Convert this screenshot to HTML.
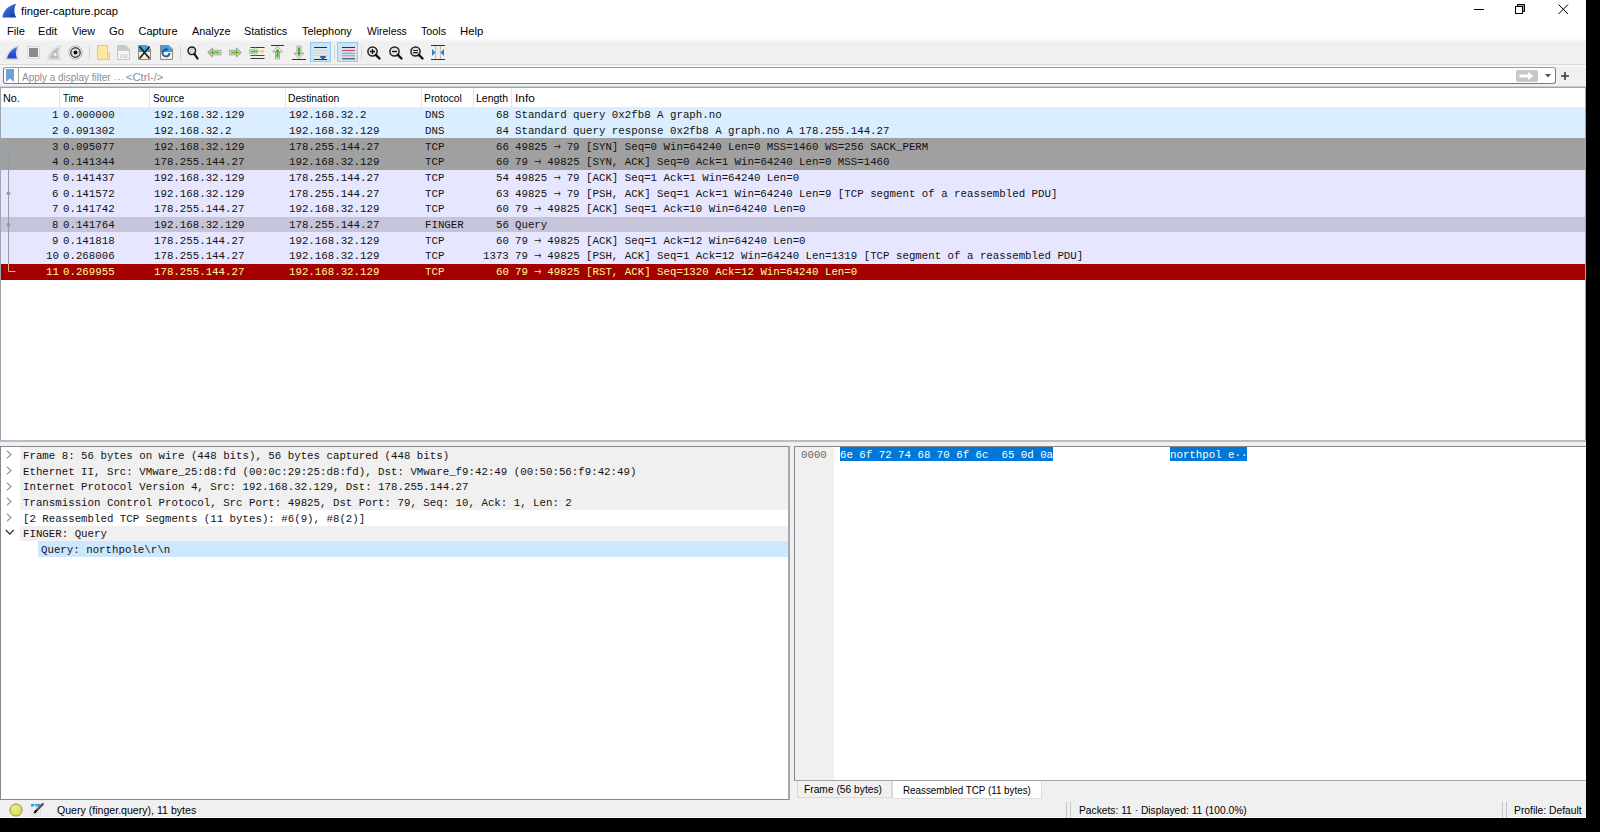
<!DOCTYPE html>
<html><head><meta charset="utf-8"><title>finger-capture.pcap</title>
<style>
html,body{margin:0;padding:0;}
body{width:1600px;height:832px;background:#000;position:relative;overflow:hidden;}
body div{position:absolute;box-sizing:border-box;}
.S{font-family:"Liberation Sans", sans-serif;white-space:pre;}
.M{font-family:"Liberation Mono", monospace;white-space:pre;}
.ar{display:inline-block;transform:translate(0.2px,-1.9px) scale(1.0,1.75);transform-origin:50% 50%;}
svg{position:absolute;overflow:visible;}
</style></head><body>

<div style="left:0px;top:0px;width:1586px;height:818px;background:#f0f0f0;"></div>
<div style="left:0px;top:0px;width:1586px;height:39px;background:#ffffff;"></div>
<div style="left:0px;top:39px;width:1586px;height:3px;background:linear-gradient(#fbfbfb,#f0f0f0);"></div>
<svg style="left:2px;top:3px" width="15" height="15" viewBox="0 0 15 15">
<defs><linearGradient id="tg" x1="0" y1="0" x2="1" y2="1"><stop offset="0" stop-color="#4a8af0"/><stop offset="1" stop-color="#0a35a0"/></linearGradient></defs>
<path d="M0.3 14.5 C1.5 7.5 6 2.5 14.2 0.8 C11.8 4.5 11.8 10.5 14.2 14.5 Z" fill="url(#tg)"/></svg>
<div class="S" style="left:20.83px;top:5.57px;font-size:11.5px;line-height:11.5px;color:#000;transform:scaleX(0.9803);transform-origin:0 0;">finger-capture.pcap</div>
<div style="left:1474px;top:9px;width:10px;height:1px;background:#000;"></div>
<svg style="left:1515px;top:4px" width="11" height="11" viewBox="0 0 11 11">
<path d="M2.5 2.5 V0.5 H9.5 V7.5 H7.5" fill="#9a9a9a" stroke="#000"/>
<rect x="0.5" y="2.5" width="7" height="7" fill="#fff" stroke="#000"/></svg>
<svg style="left:1558px;top:4px" width="11" height="11" viewBox="0 0 11 11">
<path d="M0.5 0.5 L10 10 M10 0.5 L0.5 10" stroke="#000" stroke-width="1"/></svg>
<div class="S" style="left:6.61px;top:26.19px;font-size:11px;line-height:11px;color:#000;transform:scaleX(1.0101);transform-origin:0 0;">File</div>
<div class="S" style="left:38.12px;top:26.19px;font-size:11px;line-height:11px;color:#000;">Edit</div>
<div class="S" style="left:71.95px;top:26.19px;font-size:11px;line-height:11px;color:#000;transform:scaleX(0.9748);transform-origin:0 0;">View</div>
<div class="S" style="left:109.44px;top:26.19px;font-size:11px;line-height:11px;color:#000;transform:scaleX(1.0223);transform-origin:0 0;">Go</div>
<div class="S" style="left:138.45px;top:26.19px;font-size:11px;line-height:11px;color:#000;">Capture</div>
<div class="S" style="left:192.00px;top:26.19px;font-size:11px;line-height:11px;color:#000;transform:scaleX(0.9842);transform-origin:0 0;">Analyze</div>
<div class="S" style="left:244.11px;top:26.19px;font-size:11px;line-height:11px;color:#000;transform:scaleX(0.9833);transform-origin:0 0;">Statistics</div>
<div class="S" style="left:302.18px;top:26.19px;font-size:11px;line-height:11px;color:#000;transform:scaleX(0.9932);transform-origin:0 0;">Telephony</div>
<div class="S" style="left:366.55px;top:26.19px;font-size:11px;line-height:11px;color:#000;transform:scaleX(0.9438);transform-origin:0 0;">Wireless</div>
<div class="S" style="left:421.29px;top:26.19px;font-size:11px;line-height:11px;color:#000;transform:scaleX(0.9769);transform-origin:0 0;">Tools</div>
<div class="S" style="left:460.09px;top:26.19px;font-size:11px;line-height:11px;color:#000;transform:scaleX(1.0336);transform-origin:0 0;">Help</div>
<div style="left:0px;top:64px;width:1586px;height:1px;background:#d9d9d9;"></div>
<div style="left:89px;top:45px;width:1px;height:15px;background:#d6d6d6;"></div>
<div style="left:179.5px;top:45px;width:1px;height:15px;background:#d6d6d6;"></div>
<div style="left:333.5px;top:45px;width:1px;height:15px;background:#d6d6d6;"></div>
<div style="left:360.5px;top:45px;width:1px;height:15px;background:#d6d6d6;"></div>
<div style="left:310px;top:42px;width:21px;height:20px;background:#cce4f7;border:1px solid #99c9ef;"></div>
<div style="left:337px;top:42px;width:21px;height:20px;background:#cce4f7;border:1px solid #99c9ef;"></div>
<svg style="left:5px;top:45px" width="15" height="15" viewBox="0 0 15 15"><defs><linearGradient id="fb" x1="0" y1="0" x2="0" y2="1"><stop offset="0" stop-color="#4d6ee8"/><stop offset="1" stop-color="#1f3bc9"/></linearGradient></defs><path d="M0.5 14.5 C2 8 6 2.5 14 0.5 C11.5 4.5 11.5 10 13.5 14.5 Z" fill="#e8e8e8" stroke="#d0d0d0" stroke-width="0.8"/><path d="M2 13.5 C3.5 8 7 3.5 12.5 2 C10.5 5.5 10.5 10 12 13.5 Z" fill="url(#fb)"/></svg>
<svg style="left:27px;top:46px" width="13" height="13" viewBox="0 0 13 13"><rect x="0.5" y="0.5" width="12" height="12" fill="#f4f4f4" stroke="#d8d8d8"/><rect x="2" y="2" width="9" height="9" fill="#8a8a8a"/></svg>
<svg style="left:47px;top:45px" width="15" height="15" viewBox="0 0 15 15"><path d="M0.5 14.5 C2 8 6 2.5 14 0.5 C11.5 4.5 11.5 10 13.5 14.5 Z" fill="#e6e6e6" stroke="#cfcfcf" stroke-width="0.8"/><path d="M2.5 13.5 C4 8 7 4 12 2.5 C10.5 5.5 10.5 10 12 13.5 Z" fill="#bdbdbd"/><circle cx="8" cy="9.5" r="1.6" fill="#f2f2f2"/></svg>
<svg style="left:68px;top:45px" width="15" height="15" viewBox="0 0 15 15"><circle cx="7.5" cy="7.5" r="6.7" fill="#f2f2f2" stroke="#b4b4b4" stroke-width="1"/><circle cx="7.5" cy="7.5" r="4.7" fill="#f8f8f8" stroke="#4a4a4a" stroke-width="1.5"/><circle cx="7.5" cy="7.5" r="3.5" fill="none" stroke="#6a6a6a" stroke-width="0.9" stroke-dasharray="1.2 1.55"/><circle cx="7.5" cy="7.5" r="2" fill="#000"/></svg>
<svg style="left:97px;top:45px" width="13" height="15" viewBox="0 0 13 15"><path d="M0.5 0.5 H10.5 V8 H12.5 V14.5 H0.5 Z" fill="#fce8a0" stroke="#efc95a" stroke-width="1"/><path d="M10.5 8 V14.5" stroke="#efc95a"/></svg>
<svg style="left:117px;top:45px" width="13" height="15" viewBox="0 0 13 15"><path d="M0.5 0.5 H9 L12.5 4 V14.5 H0.5 Z" fill="#f6f6f6" stroke="#c4c4c4"/><path d="M1 1 H9 L12 4 V6 H1 Z" fill="#c9c9c9"/><text x="6.5" y="12.5" font-family="Liberation Mono" font-size="4.5" text-anchor="middle" fill="#b5b5b5">010</text></svg>
<svg style="left:138px;top:45px" width="13" height="15" viewBox="0 0 13 15"><path d="M0.5 0.5 H9 L12.5 4 V14.5 H0.5 Z" fill="#f6f1dc" stroke="#8a8a80"/><path d="M1 1 H9 L12 4 V7 H1 Z" fill="#3ea3e6"/><path d="M1.5 1.5 L11.5 13.5 M11.5 1.5 L1.5 13.5" stroke="#222" stroke-width="1.8"/></svg>
<svg style="left:160px;top:45px" width="13" height="15" viewBox="0 0 13 15"><path d="M0.5 0.5 H9 L12.5 4 V14.5 H0.5 Z" fill="#f6f1dc" stroke="#8a8a80"/><path d="M1 1 H9 L12 4 V7 H1 Z" fill="#3ea3e6"/><path d="M9.5 8 A3.5 3.5 0 1 1 6.5 4.5" fill="none" stroke="#1f4fb8" stroke-width="1.8"/><path d="M5.5 2.5 L8.5 4.5 L5.5 6.5 Z" fill="#1f4fb8"/></svg>
<svg style="left:187px;top:46px" width="12" height="14" viewBox="0 0 12 14"><circle cx="4.8" cy="4.8" r="3.8" fill="#d8d8d8" stroke="#1a1a1a" stroke-width="1.4"/><path d="M7.3 7.8 L10.5 12.5" stroke="#111" stroke-width="2.2" stroke-linecap="round"/></svg>
<svg style="left:207px;top:47px" width="15" height="11" viewBox="0 0 15 11"><path d="M1 5.5 L5.6 1.2 V3.3 H13.8 V7.7 H5.6 V9.8 Z" fill="#f6f6f6" stroke="#a0a0a0" stroke-width="1.1" stroke-linejoin="round"/><path d="M2.6 5.5 L5.8 3.4 V4.7 H12.2 V6.3 H5.8 V7.6 Z" fill="#5cb81e" stroke="#5cb81e" stroke-width="0.4" stroke-linejoin="round"/></svg>
<svg style="left:229px;top:47px" width="13" height="11" viewBox="0 0 13 11"><g transform="translate(13 0) scale(-1 1)"><path d="M1 5.5 L5.6 1.2 V3.3 H12.3 V7.7 H5.6 V9.8 Z" fill="#f6f6f6" stroke="#a0a0a0" stroke-width="1.1" stroke-linejoin="round"/><path d="M2.6 5.5 L5.8 3.4 V4.7 H10.8 V6.3 H5.8 V7.6 Z" fill="#5cb81e" stroke="#5cb81e" stroke-width="0.4" stroke-linejoin="round"/></g></svg>
<svg style="left:249px;top:46px" width="16" height="14" viewBox="0 0 16 14"><path d="M1.5 1.5 H15.5" stroke="#3a3a3a" stroke-width="1"/><path d="M1.5 9.5 H15.5" stroke="#4a4a4a" stroke-width="1"/><path d="M1.5 12.5 H15.5" stroke="#3a3a3a" stroke-width="1"/><path d="M0.5 3.5 H6 V1.8 L10.5 5.5 L6 9.2 V7.5 H0.5 Z" fill="#f6f6f6" stroke="#b0b0b0" stroke-width="0.8"/><path d="M1.5 4.6 H7 V3.8 L9 5.5 L7 7.2 V6.4 H1.5 Z" fill="#5cb82a"/><rect x="11.5" y="4" width="3.5" height="2.5" fill="#f0dc3a"/></svg>
<svg style="left:271px;top:45px" width="13" height="15" viewBox="0 0 13 15"><path d="M0 0.5 H13" stroke="#333" stroke-width="1"/><path d="M6.5 1.5 L11.5 7 H8.5 V14 H4.5 V7 H1.5 Z" fill="#f4f4f4" stroke="#a8a8a8"/><path d="M6.5 3.5 L9 7 H7.6 V12.5 H5.4 V7 H4 Z" fill="#48b01a"/></svg>
<svg style="left:292px;top:45px" width="14" height="15" viewBox="0 0 14 15"><path d="M0 14.5 H14" stroke="#333" stroke-width="1"/><path d="M7 13.5 L12 8 H9 V1 H5 V8 H2 Z" fill="#f4f4f4" stroke="#a8a8a8"/><path d="M7 11.5 L9.5 8 H8.1 V2.5 H5.9 V8 H4.5 Z" fill="#48b01a"/></svg>
<svg style="left:314px;top:47px" width="13" height="13" viewBox="0 0 13 13"><path d="M0 0.5 H13 M0 12.5 H13" stroke="#2b2b2b" stroke-width="1"/><rect x="0" y="2" width="13" height="9.5" fill="#e9e9e3"/><path d="M0 3.5 H13 M0 6 H13 M0 8.5 H13" stroke="#c8c8c0" stroke-width="0.8"/><path d="M6 10 H12 L9 12.5 Z" fill="#2a5ea8"/><rect x="6" y="9" width="6" height="1.5" rx="0.7" fill="#2a5ea8"/></svg>
<svg style="left:341.5px;top:47px" width="13" height="13" viewBox="0 0 13 13"><path d="M0 0.5 H13" stroke="#333"/><path d="M0 3.5 H13" stroke="#e84040"/><path d="M0 6.3 H13" stroke="#7a9ad0"/><path d="M0 8.8 H13" stroke="#a48ab8"/><path d="M0 11.8 H13" stroke="#333"/></svg>
<svg style="left:367px;top:46px" width="14" height="14" viewBox="0 0 14 14"><circle cx="5.5" cy="5.5" r="4.6" fill="#e4e4e4" stroke="#222" stroke-width="1.5"/><path d="M8.8 8.8 L12.5 12.5" stroke="#111" stroke-width="2.4" stroke-linecap="round"/><path d="M3 5.5 H8 M5.5 3 V8" stroke="#111" stroke-width="1.3"/></svg>
<svg style="left:388.5px;top:46px" width="14" height="14" viewBox="0 0 14 14"><circle cx="5.5" cy="5.5" r="4.6" fill="#e4e4e4" stroke="#222" stroke-width="1.5"/><path d="M8.8 8.8 L12.5 12.5" stroke="#111" stroke-width="2.4" stroke-linecap="round"/><path d="M3 5.5 H8" stroke="#111" stroke-width="1.3"/></svg>
<svg style="left:410px;top:46px" width="14" height="14" viewBox="0 0 14 14"><circle cx="5.5" cy="5.5" r="4.6" fill="#e4e4e4" stroke="#222" stroke-width="1.5"/><path d="M8.8 8.8 L12.5 12.5" stroke="#111" stroke-width="2.4" stroke-linecap="round"/><path d="M3.2 4.5 H7.8 M3.2 6.6 H7.8" stroke="#111" stroke-width="1.1"/></svg>
<svg style="left:431px;top:45px" width="14" height="15" viewBox="0 0 14 15"><path d="M0 0.5 H14 M0 14.5 H14" stroke="#333"/><rect x="4" y="1" width="6" height="13" fill="#f0f0f0"/><path d="M4.5 1 V14 M9.5 1 V14" stroke="#bbb"/><path d="M4 4 H10 M4 7 H10 M4 10 H10" stroke="#ddd" stroke-width="0.6"/><path d="M1 4 L4.5 7.5 L1 11 Z" fill="#3c78c8"/><path d="M13 4 L9.5 7.5 L13 11 Z" fill="#3c78c8"/></svg>
<div style="left:0px;top:65px;width:1586px;height:2px;background:#f7f7f7;"></div>
<div style="left:2.5px;top:67px;width:1553.5px;height:17px;background:#fff;border:1px solid #7a7a7a;border-top-color:#9c9c9c;border-radius:3px;"></div>
<div style="left:18px;top:68px;width:1px;height:15px;background:#a8a8a8;"></div>
<svg style="left:6px;top:69px" width="8" height="13" viewBox="0 0 8 13"><path d="M0 0 H8 V13 L4 9.5 L0 13 Z" fill="#6d9fd8"/></svg>
<div class="S" style="left:22.10px;top:71.71px;font-size:10.5px;line-height:10.5px;color:#8c8c94;transform:scaleX(0.9486);transform-origin:0 0;">Apply a display filter</div>
<div style="left:115.3px;top:78.6px;width:1.2px;height:1.2px;background:#b0b0b8;"></div>
<div style="left:118.4px;top:78.6px;width:1.2px;height:1.2px;background:#b0b0b8;"></div>
<div style="left:121.5px;top:78.6px;width:1.2px;height:1.2px;background:#b0b0b8;"></div>
<div class="S" style="left:125.74px;top:71.71px;font-size:10.5px;line-height:10.5px;color:#8c8c94;transform:scaleX(1.0657);transform-origin:0 0;">&lt;Ctrl-/&gt;</div>
<div style="left:1516.3px;top:69.6px;width:21.4px;height:12px;background:#c8c8c8;border-radius:2px;"></div>
<svg style="left:1519px;top:71.5px" width="16" height="8" viewBox="0 0 16 8"><path d="M0.5 2.5 H9 V0 L14.5 4 L9 8 V5.5 H0.5 Z" fill="#fff"/></svg>
<svg style="left:1545px;top:74px" width="6" height="3.5" viewBox="0 0 6 3.5"><path d="M0 0 H6 L3 3.5 Z" fill="#555"/></svg>
<svg style="left:1561px;top:72px" width="8" height="8" viewBox="0 0 8 8"><path d="M4 0 V8 M0 4 H8" stroke="#3a3a3a" stroke-width="1.6"/></svg>
<div style="left:0px;top:87px;width:1586px;height:353px;background:#ffffff;"></div>
<div style="left:0px;top:86px;width:1586px;height:1px;background:#c9ccd1;"></div>
<div style="left:0px;top:87px;width:1586px;height:1px;background:#a0a4ab;"></div>
<div style="left:0px;top:87px;width:1px;height:353px;background:#a0a4ab;"></div>
<div style="left:1585px;top:87px;width:1px;height:353px;background:#a0a4ab;"></div>
<div style="left:59px;top:88px;width:1px;height:19px;background:#e3e3e3;"></div>
<div style="left:149.3px;top:88px;width:1px;height:19px;background:#e3e3e3;"></div>
<div style="left:285px;top:88px;width:1px;height:19px;background:#e3e3e3;"></div>
<div style="left:420.8px;top:88px;width:1px;height:19px;background:#e3e3e3;"></div>
<div style="left:472.5px;top:88px;width:1px;height:19px;background:#e3e3e3;"></div>
<div style="left:511.3px;top:88px;width:1px;height:19px;background:#e3e3e3;"></div>
<div class="S" style="left:3.13px;top:92.77px;font-size:10.9px;line-height:10.9px;color:#000;transform:scaleX(0.9936);transform-origin:0 0;">No.</div>
<div class="S" style="left:62.81px;top:92.77px;font-size:10.9px;line-height:10.9px;color:#000;transform:scaleX(0.8655);transform-origin:0 0;">Time</div>
<div class="S" style="left:153.26px;top:92.77px;font-size:10.9px;line-height:10.9px;color:#000;transform:scaleX(0.9040);transform-origin:0 0;">Source</div>
<div class="S" style="left:288.38px;top:92.77px;font-size:10.9px;line-height:10.9px;color:#000;transform:scaleX(0.9411);transform-origin:0 0;">Destination</div>
<div class="S" style="left:423.97px;top:92.77px;font-size:10.9px;line-height:10.9px;color:#000;transform:scaleX(0.9487);transform-origin:0 0;">Protocol</div>
<div class="S" style="left:475.76px;top:92.77px;font-size:10.9px;line-height:10.9px;color:#000;transform:scaleX(0.9631);transform-origin:0 0;">Length</div>
<div class="S" style="left:514.73px;top:92.77px;font-size:10.9px;line-height:10.9px;color:#000;transform:scaleX(1.0878);transform-origin:0 0;">Info</div>
<div style="left:1px;top:106.8px;width:1584px;height:15.72px;background:#daeeff;"></div>
<div class="M" style="left:52.14px;top:110.16px;font-size:11.4px;line-height:11.4px;color:#121212;transform:scaleX(0.9446);transform-origin:0 0;">1</div>
<div class="M" style="left:62.70px;top:110.16px;font-size:11.4px;line-height:11.4px;color:#121212;transform:scaleX(0.9446);transform-origin:0 0;">0.000000</div>
<div class="M" style="left:153.70px;top:110.16px;font-size:11.4px;line-height:11.4px;color:#121212;transform:scaleX(0.9446);transform-origin:0 0;">192.168.32.129</div>
<div class="M" style="left:289.30px;top:110.16px;font-size:11.4px;line-height:11.4px;color:#121212;transform:scaleX(0.9446);transform-origin:0 0;">192.168.32.2</div>
<div class="M" style="left:424.90px;top:110.16px;font-size:11.4px;line-height:11.4px;color:#121212;transform:scaleX(0.9446);transform-origin:0 0;">DNS</div>
<div class="M" style="left:496.38px;top:110.16px;font-size:11.4px;line-height:11.4px;color:#121212;transform:scaleX(0.9446);transform-origin:0 0;">68</div>
<div class="M" style="left:515.30px;top:110.16px;font-size:11.4px;line-height:11.4px;color:#121212;transform:scaleX(0.9446);transform-origin:0 0;">Standard query 0x2fb8 A graph.no</div>
<div style="left:1px;top:122.5px;width:1584px;height:15.72px;background:#daeeff;"></div>
<div class="M" style="left:52.14px;top:125.86px;font-size:11.4px;line-height:11.4px;color:#121212;transform:scaleX(0.9446);transform-origin:0 0;">2</div>
<div class="M" style="left:62.70px;top:125.86px;font-size:11.4px;line-height:11.4px;color:#121212;transform:scaleX(0.9446);transform-origin:0 0;">0.091302</div>
<div class="M" style="left:153.70px;top:125.86px;font-size:11.4px;line-height:11.4px;color:#121212;transform:scaleX(0.9446);transform-origin:0 0;">192.168.32.2</div>
<div class="M" style="left:289.30px;top:125.86px;font-size:11.4px;line-height:11.4px;color:#121212;transform:scaleX(0.9446);transform-origin:0 0;">192.168.32.129</div>
<div class="M" style="left:424.90px;top:125.86px;font-size:11.4px;line-height:11.4px;color:#121212;transform:scaleX(0.9446);transform-origin:0 0;">DNS</div>
<div class="M" style="left:496.38px;top:125.86px;font-size:11.4px;line-height:11.4px;color:#121212;transform:scaleX(0.9446);transform-origin:0 0;">84</div>
<div class="M" style="left:515.30px;top:125.86px;font-size:11.4px;line-height:11.4px;color:#121212;transform:scaleX(0.9446);transform-origin:0 0;">Standard query response 0x2fb8 A graph.no A 178.255.144.27</div>
<div style="left:1px;top:138.2px;width:1584px;height:15.72px;background:#a0a0a0;"></div>
<div class="M" style="left:52.14px;top:141.56px;font-size:11.4px;line-height:11.4px;color:#121212;transform:scaleX(0.9446);transform-origin:0 0;">3</div>
<div class="M" style="left:62.70px;top:141.56px;font-size:11.4px;line-height:11.4px;color:#121212;transform:scaleX(0.9446);transform-origin:0 0;">0.095077</div>
<div class="M" style="left:153.70px;top:141.56px;font-size:11.4px;line-height:11.4px;color:#121212;transform:scaleX(0.9446);transform-origin:0 0;">192.168.32.129</div>
<div class="M" style="left:289.30px;top:141.56px;font-size:11.4px;line-height:11.4px;color:#121212;transform:scaleX(0.9446);transform-origin:0 0;">178.255.144.27</div>
<div class="M" style="left:424.90px;top:141.56px;font-size:11.4px;line-height:11.4px;color:#121212;transform:scaleX(0.9446);transform-origin:0 0;">TCP</div>
<div class="M" style="left:496.38px;top:141.56px;font-size:11.4px;line-height:11.4px;color:#121212;transform:scaleX(0.9446);transform-origin:0 0;">66</div>
<div class="M" style="left:515.30px;top:141.56px;font-size:11.4px;line-height:11.4px;color:#121212;transform:scaleX(0.9446);transform-origin:0 0;">49825 <span class="ar">→</span> 79 [SYN] Seq=0 Win=64240 Len=0 MSS=1460 WS=256 SACK_PERM</div>
<div style="left:1px;top:153.9px;width:1584px;height:15.72px;background:#a0a0a0;"></div>
<div class="M" style="left:52.14px;top:157.26px;font-size:11.4px;line-height:11.4px;color:#121212;transform:scaleX(0.9446);transform-origin:0 0;">4</div>
<div class="M" style="left:62.70px;top:157.26px;font-size:11.4px;line-height:11.4px;color:#121212;transform:scaleX(0.9446);transform-origin:0 0;">0.141344</div>
<div class="M" style="left:153.70px;top:157.26px;font-size:11.4px;line-height:11.4px;color:#121212;transform:scaleX(0.9446);transform-origin:0 0;">178.255.144.27</div>
<div class="M" style="left:289.30px;top:157.26px;font-size:11.4px;line-height:11.4px;color:#121212;transform:scaleX(0.9446);transform-origin:0 0;">192.168.32.129</div>
<div class="M" style="left:424.90px;top:157.26px;font-size:11.4px;line-height:11.4px;color:#121212;transform:scaleX(0.9446);transform-origin:0 0;">TCP</div>
<div class="M" style="left:496.38px;top:157.26px;font-size:11.4px;line-height:11.4px;color:#121212;transform:scaleX(0.9446);transform-origin:0 0;">60</div>
<div class="M" style="left:515.30px;top:157.26px;font-size:11.4px;line-height:11.4px;color:#121212;transform:scaleX(0.9446);transform-origin:0 0;">79 <span class="ar">→</span> 49825 [SYN, ACK] Seq=0 Ack=1 Win=64240 Len=0 MSS=1460</div>
<div style="left:1px;top:169.6px;width:1584px;height:15.72px;background:#e7e6ff;"></div>
<div class="M" style="left:52.14px;top:172.96px;font-size:11.4px;line-height:11.4px;color:#121212;transform:scaleX(0.9446);transform-origin:0 0;">5</div>
<div class="M" style="left:62.70px;top:172.96px;font-size:11.4px;line-height:11.4px;color:#121212;transform:scaleX(0.9446);transform-origin:0 0;">0.141437</div>
<div class="M" style="left:153.70px;top:172.96px;font-size:11.4px;line-height:11.4px;color:#121212;transform:scaleX(0.9446);transform-origin:0 0;">192.168.32.129</div>
<div class="M" style="left:289.30px;top:172.96px;font-size:11.4px;line-height:11.4px;color:#121212;transform:scaleX(0.9446);transform-origin:0 0;">178.255.144.27</div>
<div class="M" style="left:424.90px;top:172.96px;font-size:11.4px;line-height:11.4px;color:#121212;transform:scaleX(0.9446);transform-origin:0 0;">TCP</div>
<div class="M" style="left:496.38px;top:172.96px;font-size:11.4px;line-height:11.4px;color:#121212;transform:scaleX(0.9446);transform-origin:0 0;">54</div>
<div class="M" style="left:515.30px;top:172.96px;font-size:11.4px;line-height:11.4px;color:#121212;transform:scaleX(0.9446);transform-origin:0 0;">49825 <span class="ar">→</span> 79 [ACK] Seq=1 Ack=1 Win=64240 Len=0</div>
<div style="left:1px;top:185.3px;width:1584px;height:15.72px;background:#e7e6ff;"></div>
<div class="M" style="left:52.14px;top:188.66px;font-size:11.4px;line-height:11.4px;color:#121212;transform:scaleX(0.9446);transform-origin:0 0;">6</div>
<div class="M" style="left:62.70px;top:188.66px;font-size:11.4px;line-height:11.4px;color:#121212;transform:scaleX(0.9446);transform-origin:0 0;">0.141572</div>
<div class="M" style="left:153.70px;top:188.66px;font-size:11.4px;line-height:11.4px;color:#121212;transform:scaleX(0.9446);transform-origin:0 0;">192.168.32.129</div>
<div class="M" style="left:289.30px;top:188.66px;font-size:11.4px;line-height:11.4px;color:#121212;transform:scaleX(0.9446);transform-origin:0 0;">178.255.144.27</div>
<div class="M" style="left:424.90px;top:188.66px;font-size:11.4px;line-height:11.4px;color:#121212;transform:scaleX(0.9446);transform-origin:0 0;">TCP</div>
<div class="M" style="left:496.38px;top:188.66px;font-size:11.4px;line-height:11.4px;color:#121212;transform:scaleX(0.9446);transform-origin:0 0;">63</div>
<div class="M" style="left:515.30px;top:188.66px;font-size:11.4px;line-height:11.4px;color:#121212;transform:scaleX(0.9446);transform-origin:0 0;">49825 <span class="ar">→</span> 79 [PSH, ACK] Seq=1 Ack=1 Win=64240 Len=9 [TCP segment of a reassembled PDU]</div>
<div style="left:1px;top:201.0px;width:1584px;height:15.72px;background:#e7e6ff;"></div>
<div class="M" style="left:52.14px;top:204.36px;font-size:11.4px;line-height:11.4px;color:#121212;transform:scaleX(0.9446);transform-origin:0 0;">7</div>
<div class="M" style="left:62.70px;top:204.36px;font-size:11.4px;line-height:11.4px;color:#121212;transform:scaleX(0.9446);transform-origin:0 0;">0.141742</div>
<div class="M" style="left:153.70px;top:204.36px;font-size:11.4px;line-height:11.4px;color:#121212;transform:scaleX(0.9446);transform-origin:0 0;">178.255.144.27</div>
<div class="M" style="left:289.30px;top:204.36px;font-size:11.4px;line-height:11.4px;color:#121212;transform:scaleX(0.9446);transform-origin:0 0;">192.168.32.129</div>
<div class="M" style="left:424.90px;top:204.36px;font-size:11.4px;line-height:11.4px;color:#121212;transform:scaleX(0.9446);transform-origin:0 0;">TCP</div>
<div class="M" style="left:496.38px;top:204.36px;font-size:11.4px;line-height:11.4px;color:#121212;transform:scaleX(0.9446);transform-origin:0 0;">60</div>
<div class="M" style="left:515.30px;top:204.36px;font-size:11.4px;line-height:11.4px;color:#121212;transform:scaleX(0.9446);transform-origin:0 0;">79 <span class="ar">→</span> 49825 [ACK] Seq=1 Ack=10 Win=64240 Len=0</div>
<div style="left:1px;top:216.7px;width:1584px;height:15.72px;background:#c6c4d9;"></div>
<div class="M" style="left:52.14px;top:220.06px;font-size:11.4px;line-height:11.4px;color:#121212;transform:scaleX(0.9446);transform-origin:0 0;">8</div>
<div class="M" style="left:62.70px;top:220.06px;font-size:11.4px;line-height:11.4px;color:#121212;transform:scaleX(0.9446);transform-origin:0 0;">0.141764</div>
<div class="M" style="left:153.70px;top:220.06px;font-size:11.4px;line-height:11.4px;color:#121212;transform:scaleX(0.9446);transform-origin:0 0;">192.168.32.129</div>
<div class="M" style="left:289.30px;top:220.06px;font-size:11.4px;line-height:11.4px;color:#121212;transform:scaleX(0.9446);transform-origin:0 0;">178.255.144.27</div>
<div class="M" style="left:424.90px;top:220.06px;font-size:11.4px;line-height:11.4px;color:#121212;transform:scaleX(0.9446);transform-origin:0 0;">FINGER</div>
<div class="M" style="left:496.38px;top:220.06px;font-size:11.4px;line-height:11.4px;color:#121212;transform:scaleX(0.9446);transform-origin:0 0;">56</div>
<div class="M" style="left:515.30px;top:220.06px;font-size:11.4px;line-height:11.4px;color:#121212;transform:scaleX(0.9446);transform-origin:0 0;">Query</div>
<div style="left:1px;top:232.4px;width:1584px;height:15.72px;background:#e7e6ff;"></div>
<div class="M" style="left:52.14px;top:235.76px;font-size:11.4px;line-height:11.4px;color:#121212;transform:scaleX(0.9446);transform-origin:0 0;">9</div>
<div class="M" style="left:62.70px;top:235.76px;font-size:11.4px;line-height:11.4px;color:#121212;transform:scaleX(0.9446);transform-origin:0 0;">0.141818</div>
<div class="M" style="left:153.70px;top:235.76px;font-size:11.4px;line-height:11.4px;color:#121212;transform:scaleX(0.9446);transform-origin:0 0;">178.255.144.27</div>
<div class="M" style="left:289.30px;top:235.76px;font-size:11.4px;line-height:11.4px;color:#121212;transform:scaleX(0.9446);transform-origin:0 0;">192.168.32.129</div>
<div class="M" style="left:424.90px;top:235.76px;font-size:11.4px;line-height:11.4px;color:#121212;transform:scaleX(0.9446);transform-origin:0 0;">TCP</div>
<div class="M" style="left:496.38px;top:235.76px;font-size:11.4px;line-height:11.4px;color:#121212;transform:scaleX(0.9446);transform-origin:0 0;">60</div>
<div class="M" style="left:515.30px;top:235.76px;font-size:11.4px;line-height:11.4px;color:#121212;transform:scaleX(0.9446);transform-origin:0 0;">79 <span class="ar">→</span> 49825 [ACK] Seq=1 Ack=12 Win=64240 Len=0</div>
<div style="left:1px;top:248.1px;width:1584px;height:15.72px;background:#e7e6ff;"></div>
<div class="M" style="left:45.68px;top:251.46px;font-size:11.4px;line-height:11.4px;color:#121212;transform:scaleX(0.9446);transform-origin:0 0;">10</div>
<div class="M" style="left:62.70px;top:251.46px;font-size:11.4px;line-height:11.4px;color:#121212;transform:scaleX(0.9446);transform-origin:0 0;">0.268006</div>
<div class="M" style="left:153.70px;top:251.46px;font-size:11.4px;line-height:11.4px;color:#121212;transform:scaleX(0.9446);transform-origin:0 0;">178.255.144.27</div>
<div class="M" style="left:289.30px;top:251.46px;font-size:11.4px;line-height:11.4px;color:#121212;transform:scaleX(0.9446);transform-origin:0 0;">192.168.32.129</div>
<div class="M" style="left:424.90px;top:251.46px;font-size:11.4px;line-height:11.4px;color:#121212;transform:scaleX(0.9446);transform-origin:0 0;">TCP</div>
<div class="M" style="left:483.45px;top:251.46px;font-size:11.4px;line-height:11.4px;color:#121212;transform:scaleX(0.9446);transform-origin:0 0;">1373</div>
<div class="M" style="left:515.30px;top:251.46px;font-size:11.4px;line-height:11.4px;color:#121212;transform:scaleX(0.9446);transform-origin:0 0;">79 <span class="ar">→</span> 49825 [PSH, ACK] Seq=1 Ack=12 Win=64240 Len=1319 [TCP segment of a reassembled PDU]</div>
<div style="left:1px;top:263.8px;width:1584px;height:15.72px;background:#a40000;"></div>
<div class="M" style="left:45.68px;top:267.16px;font-size:11.4px;line-height:11.4px;color:#fffc9c;transform:scaleX(0.9446);transform-origin:0 0;">11</div>
<div class="M" style="left:62.70px;top:267.16px;font-size:11.4px;line-height:11.4px;color:#fffc9c;transform:scaleX(0.9446);transform-origin:0 0;">0.269955</div>
<div class="M" style="left:153.70px;top:267.16px;font-size:11.4px;line-height:11.4px;color:#fffc9c;transform:scaleX(0.9446);transform-origin:0 0;">178.255.144.27</div>
<div class="M" style="left:289.30px;top:267.16px;font-size:11.4px;line-height:11.4px;color:#fffc9c;transform:scaleX(0.9446);transform-origin:0 0;">192.168.32.129</div>
<div class="M" style="left:424.90px;top:267.16px;font-size:11.4px;line-height:11.4px;color:#fffc9c;transform:scaleX(0.9446);transform-origin:0 0;">TCP</div>
<div class="M" style="left:496.38px;top:267.16px;font-size:11.4px;line-height:11.4px;color:#fffc9c;transform:scaleX(0.9446);transform-origin:0 0;">60</div>
<div class="M" style="left:515.30px;top:267.16px;font-size:11.4px;line-height:11.4px;color:#fffc9c;transform:scaleX(0.9446);transform-origin:0 0;">79 <span class="ar">→</span> 49825 [RST, ACK] Seq=1320 Ack=12 Win=64240 Len=0</div>
<svg style="left:0px;top:130px" width="20" height="150" viewBox="0 0 20 150"><path d="M15.5 16.5 H8.5 V134" fill="none" stroke="#8e9ea6" stroke-width="1"/><path d="M8.5 134 V141.5 H15.5" fill="none" stroke="#f2b487" stroke-width="1"/><circle cx="8.5" cy="63.3" r="1.9" fill="#8e9ea6"/><circle cx="8.5" cy="94.7" r="1.9" fill="#8e9ea6"/></svg>
<div style="left:0px;top:440px;width:1586px;height:1.5px;background:#b9bcc1;"></div>
<div style="left:0px;top:446px;width:790px;height:354px;background:#fff;border:1px solid #828790;border-right:2px solid #a4a8ae;"></div>
<div style="left:19.5px;top:447.0px;width:768.5px;height:15.72px;background:#f0f0f0;"></div>
<svg style="left:6.2px;top:450.10px" width="7" height="9" viewBox="0 0 7 9"><path d="M1 0.8 L5 4.5 L1 8.2" fill="none" stroke="#9a9a9a" stroke-width="1.2"/></svg>
<div class="M" style="left:22.60px;top:450.96px;font-size:11.4px;line-height:11.4px;color:#121212;transform:scaleX(0.9446);transform-origin:0 0;">Frame 8: 56 bytes on wire (448 bits), 56 bytes captured (448 bits)</div>
<div style="left:19.5px;top:462.7px;width:768.5px;height:15.72px;background:#f0f0f0;"></div>
<svg style="left:6.2px;top:465.80px" width="7" height="9" viewBox="0 0 7 9"><path d="M1 0.8 L5 4.5 L1 8.2" fill="none" stroke="#9a9a9a" stroke-width="1.2"/></svg>
<div class="M" style="left:22.60px;top:466.66px;font-size:11.4px;line-height:11.4px;color:#121212;transform:scaleX(0.9446);transform-origin:0 0;">Ethernet II, Src: VMware_25:d8:fd (00:0c:29:25:d8:fd), Dst: VMware_f9:42:49 (00:50:56:f9:42:49)</div>
<div style="left:19.5px;top:478.4px;width:768.5px;height:15.72px;background:#f0f0f0;"></div>
<svg style="left:6.2px;top:481.50px" width="7" height="9" viewBox="0 0 7 9"><path d="M1 0.8 L5 4.5 L1 8.2" fill="none" stroke="#9a9a9a" stroke-width="1.2"/></svg>
<div class="M" style="left:22.60px;top:482.36px;font-size:11.4px;line-height:11.4px;color:#121212;transform:scaleX(0.9446);transform-origin:0 0;">Internet Protocol Version 4, Src: 192.168.32.129, Dst: 178.255.144.27</div>
<div style="left:19.5px;top:494.1px;width:768.5px;height:15.72px;background:#f0f0f0;"></div>
<svg style="left:6.2px;top:497.20px" width="7" height="9" viewBox="0 0 7 9"><path d="M1 0.8 L5 4.5 L1 8.2" fill="none" stroke="#9a9a9a" stroke-width="1.2"/></svg>
<div class="M" style="left:22.60px;top:498.06px;font-size:11.4px;line-height:11.4px;color:#121212;transform:scaleX(0.9446);transform-origin:0 0;">Transmission Control Protocol, Src Port: 49825, Dst Port: 79, Seq: 10, Ack: 1, Len: 2</div>
<svg style="left:6.2px;top:512.90px" width="7" height="9" viewBox="0 0 7 9"><path d="M1 0.8 L5 4.5 L1 8.2" fill="none" stroke="#9a9a9a" stroke-width="1.2"/></svg>
<div class="M" style="left:22.60px;top:513.76px;font-size:11.4px;line-height:11.4px;color:#121212;transform:scaleX(0.9446);transform-origin:0 0;">[2 Reassembled TCP Segments (11 bytes): #6(9), #8(2)]</div>
<div style="left:19.5px;top:525.5px;width:768.5px;height:15.72px;background:#f0f0f0;"></div>
<svg style="left:5px;top:529.10px" width="10" height="7" viewBox="0 0 10 7"><path d="M0.8 1 L4.8 5 L8.8 1" fill="none" stroke="#3a3a3a" stroke-width="1.3"/></svg>
<div class="M" style="left:22.60px;top:529.46px;font-size:11.4px;line-height:11.4px;color:#121212;transform:scaleX(0.9446);transform-origin:0 0;">FINGER: Query</div>
<div style="left:38px;top:541.2px;width:750px;height:15.72px;background:#cce8ff;"></div>
<div class="M" style="left:40.60px;top:545.16px;font-size:11.4px;line-height:11.4px;color:#121212;transform:scaleX(0.9446);transform-origin:0 0;">Query: northpole\r\n</div>
<div style="left:794px;top:446px;width:792px;height:335px;background:#fff;border:1px solid #828790;border-right:none;border-bottom:1.5px solid #a2a6ac;"></div>
<div style="left:795px;top:447px;width:39px;height:333px;background:#f0f0f0;"></div>
<div class="M" style="left:801.00px;top:449.66px;font-size:11.4px;line-height:11.4px;color:#6a6a6a;transform:scaleX(0.9446);transform-origin:0 0;">0000</div>
<div style="left:840px;top:447px;width:213px;height:14px;background:#0078d7;"></div>
<div class="M" style="left:840.20px;top:449.66px;font-size:11.4px;line-height:11.4px;color:#ffffff;transform:scaleX(0.9446);transform-origin:0 0;">6e 6f 72 74 68 70 6f 6c  65 0d 0a</div>
<div style="left:1169.6px;top:447px;width:77.6px;height:14px;background:#0078d7;"></div>
<div class="M" style="left:1169.80px;top:449.66px;font-size:11.4px;line-height:11.4px;color:#ffffff;transform:scaleX(0.9446);transform-origin:0 0;">northpol e··</div>
<div style="left:796.5px;top:780.5px;width:95px;height:17px;background:#f0f0f0;border:1px solid #d9d9d9;border-top:none;"></div>
<div class="S" style="left:803.68px;top:784.83px;font-size:10.0px;line-height:10.0px;color:#000;transform:scaleX(1.0241);transform-origin:0 0;">Frame (56 bytes)</div>
<div style="left:891.5px;top:781px;width:150.5px;height:18px;background:#fff;border:1px solid #dcdcdc;border-top:none;"></div>
<div class="S" style="left:902.71px;top:786.03px;font-size:10.0px;line-height:10.0px;color:#000;transform:scaleX(0.9833);transform-origin:0 0;">Reassembled TCP (11 bytes)</div>
<div style="left:0px;top:799.5px;width:1586px;height:18.5px;background:#f0f0f0;"></div>
<div style="left:0px;top:817px;width:1586px;height:1px;background:#fafafa;"></div>
<svg style="left:8.5px;top:802.6px" width="14" height="14" viewBox="0 0 14 14"><defs><radialGradient id="yc" cx="0.4" cy="0.3" r="0.75"><stop offset="0" stop-color="#ecec8a"/><stop offset="1" stop-color="#d8d850"/></radialGradient></defs><circle cx="7" cy="7" r="6.1" fill="url(#yc)" stroke="#94943a" stroke-width="1"/></svg>
<svg style="left:30px;top:802.5px" width="14" height="14" viewBox="0 0 14 14"><rect x="1" y="1" width="9.5" height="12.5" fill="#efefea" stroke="#dcdcd6" stroke-width="0.6"/><path d="M2 9.5 H9.5 M2 11.8 H9.5 M2 7.2 H5" stroke="#d4d4ce" stroke-width="0.6"/><path d="M1 1 H10.5 V3.6 H1 Z" fill="#3aa0e0"/><path d="M4.8 1 L5.8 3.8 L3.6 3.8 Z" fill="#fff"/><path d="M12.8 1.2 L5.6 8.4" stroke="#5a5a5a" stroke-width="2.4" stroke-linecap="round"/><path d="M6.2 7.8 L4.6 9.6" stroke="#111" stroke-width="1.8" stroke-linecap="round"/></svg>
<div class="S" style="left:56.52px;top:805.97px;font-size:10.2px;line-height:10.2px;color:#000;transform:scaleX(1.0385);transform-origin:0 0;">Query (finger.query), 11 bytes</div>
<div style="left:1066.2px;top:802px;width:1px;height:16px;background:#c4c4c4;"></div>
<div style="left:1070.2px;top:802px;width:1px;height:16px;background:#c4c4c4;"></div>
<div style="left:1502px;top:802px;width:1px;height:16px;background:#c4c4c4;"></div>
<div style="left:1506px;top:802px;width:1px;height:16px;background:#c4c4c4;"></div>
<div class="S" style="left:1078.98px;top:805.97px;font-size:10.2px;line-height:10.2px;color:#000;transform:scaleX(1.0067);transform-origin:0 0;">Packets: 11 · Displayed: 11 (100.0%)</div>
<div class="S" style="left:1514.37px;top:805.97px;font-size:10.2px;line-height:10.2px;color:#000;transform:scaleX(1.0122);transform-origin:0 0;">Profile: Default</div>
</body></html>
